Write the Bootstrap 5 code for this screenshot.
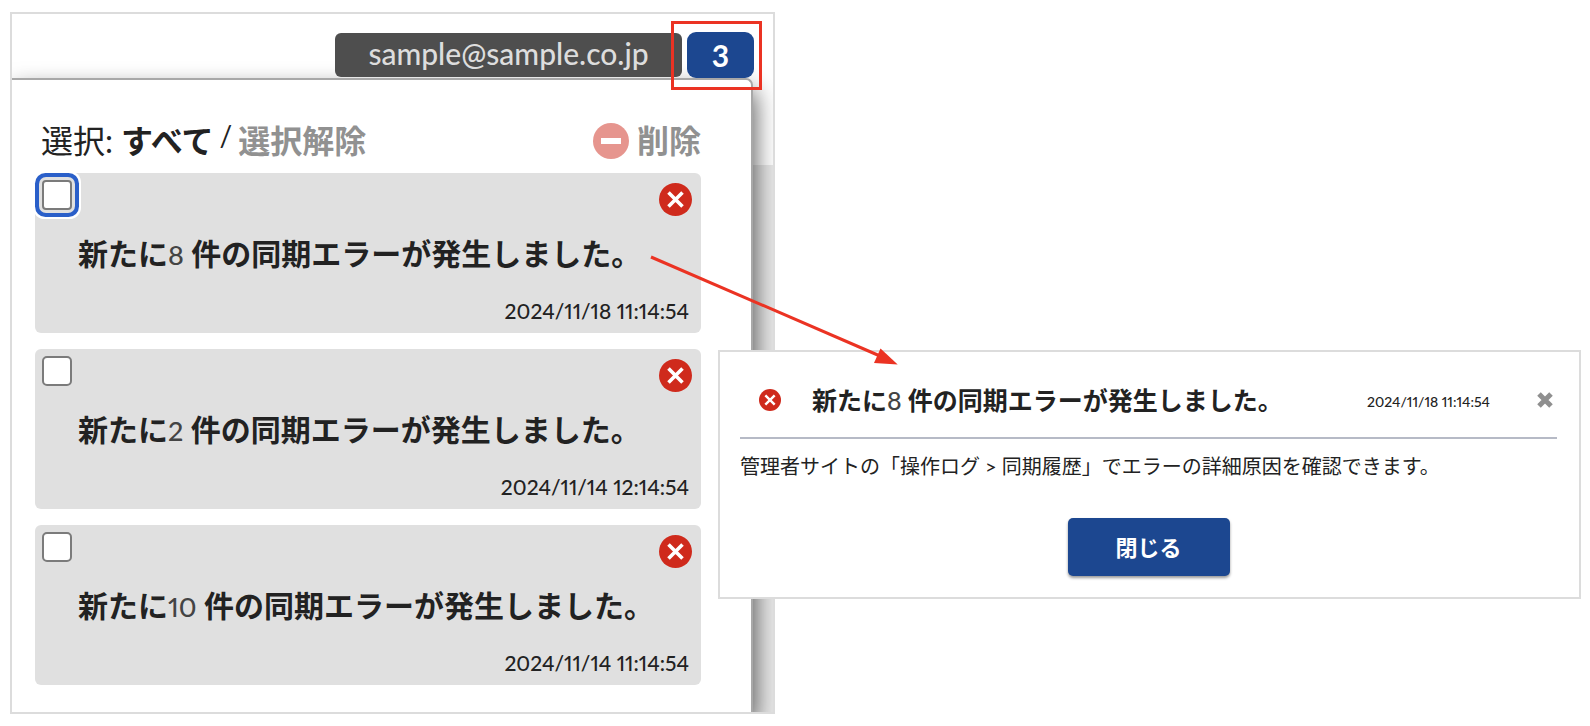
<!DOCTYPE html>
<html lang="ja">
<head>
<meta charset="utf-8">
<meta name="viewport" content="width=device-width, initial-scale=1">
<title>通知</title>
<link href="https://cdn.jsdelivr.net/npm/bootstrap@5.3.0/dist/css/bootstrap.min.css" rel="stylesheet">
<style>
  body { font-family: Lato, "Noto Sans CJK JP", sans-serif; color: #222; background: #fff; line-height: 1.5; }
  .stage { display: grid; grid-template-columns: 708fr 57fr 806fr; padding: 12px 9px 12px 10px; }
  .window { grid-area: 1 / 1 / 2 / 3; border: 2px solid #dcdcdc; background: linear-gradient(#fff 151px, #e8e8e8 151px); }
  .dialog-box { grid-area: 1 / 2 / 2 / 4; align-self: start; margin-top: 338px; border: 2px solid #dcdcdc; background: #fff; z-index: 2; padding: 0 22px 21px 20px; }
  .topbar { padding: 18px 19px 0 0; gap: 5px; }
  .account { width: 347px; height: 44px; margin-top: 1px; border-radius: 6px; background: #4e4e4e; color: #ddd; font-size: 30px; line-height: 38px; font-weight: 500; }
  .account:hover { background: #5a5a5a; color: #fff; }
  .counter { width: 67px; height: 46px; border-radius: 9px; background: #1c4790; color: #fff; font-size: 30px; line-height: 46px; font-weight: 700; }
  .counter:hover { background: #163a78; color: #fff; }
  .callout { position: absolute; top: -11px; left: -16px; right: -8px; bottom: -12px; border: 3px solid #eb3323; z-index: 3; }
  .drawer { margin-right: 20px; padding: 37px 50px 27px 23px; border: solid #a8a8a8; border-width: 2px 2px 0 0; border-radius: 0 7px 0 0; background: #fff; box-shadow: 2px 12px 24px rgba(0,0,0,.65); }
  .clip { overflow: hidden; }
  .toolbar { font-size: 32px; line-height: 48px; padding: 0 0 8px 6px; }
  .toolbar button { font-size: 32px; line-height: 48px; font-weight: 700; }
  .muted, .muted:hover { color: #919191; }
  .slash { font-size: 28px; line-height: 36px; margin: 0 6px; }
  .notice { border-radius: 6px; background: #e0e0e0; padding: 7px 9px 6px 7px; }
  .notice + .notice { margin-top: 16px; }
  .notice .form-check-input { width: 30px; height: 30px; margin: 0; border: 2px solid #7b7b7b; border-radius: 5px; }
  .notice .form-check-input.focused { border-radius: 4px; box-shadow: 0 0 0 3px #e0e0e0, 0 0 0 7px #2a5fc9, 0 0 0 9px #fff; }
  .state { margin-top: 3px; }
  .notice h2 { font-size: 30px; line-height: 44px; margin: 15px 0 20px 36px; font-weight: 700; }
  .num { font-size: 27px; line-height: 1; color: #444; }
  .notice time { display: block; font-size: 21px; line-height: 32px; text-align: right; padding-right: 3px; }
  time, .num { font-variant-numeric: proportional-nums; font-weight: 500; }
  .dialog-head { border-bottom: 2px solid #b6bac6; padding: 29px 4px 18px 19px; }
  .dialog-head h2 { font-size: 25px; line-height: 38px; margin: 0 0 0 31px; font-weight: 700; }
  .dialog-head .num { font-size: 25px; }
  .dialog-head time { font-size: 14px; line-height: 24px; margin: 3px 47px 0 auto; }
  .dialog-box p { font-size: 20px; line-height: 30px; margin: 12px 0 37px; }
  .close-btn { width: 162px; height: 58px; border-radius: 5px; background: #1c4790; color: #fff; font-size: 22px; font-weight: 700; box-shadow: 0 2px 3px rgba(0,0,0,.4); }
  .close-btn:hover { background: #163a78; color: #fff; }
  .arrow { position: absolute; left: 640px; top: 245px; z-index: 4; pointer-events: none; }
</style>
</head>
<body>
<svg class="d-none" xmlns="http://www.w3.org/2000/svg">
  <symbol id="error" viewBox="0 0 33 33"><circle cx="16.500" cy="16.500" r="16.500" fill="#cf2a1c"/><path d="M9.500 9.500l14 14M23.500 9.500l-14 14" stroke="#fff" stroke-width="3.600"/></symbol>
</svg>
<main class="stage position-relative">
  <section class="window" aria-label="通知一覧">
    <div class="clip">
    <header class="topbar d-flex justify-content-end position-relative">
      <button type="button" class="account btn border-0 px-0 pt-0 pb-1">sample@sample.co.jp</button>
      <div class="position-relative">
        <button type="button" class="counter btn border-0 p-0">3</button>
        <span class="callout"></span>
      </div>
    </header>
    <div class="drawer">
      <div class="toolbar d-flex align-items-center">
        <span>選択:</span>
        <button type="button" class="btn text-reset border-0 p-0 ms-2">すべて</button>
        <span class="slash align-self-start">/</span>
        <button type="button" class="btn border-0 p-0 muted">選択解除</button>
        <button type="button" class="btn border-0 p-0 muted ms-auto d-flex align-items-center gap-2">
          <svg width="36" height="36" viewBox="0 0 36 36"><circle cx="18" cy="18" r="18" fill="#e6958e"/><path d="M8 18h20" stroke="#fff" stroke-width="6"/></svg>削除
        </button>
      </div>
      <article class="notice">
        <div class="d-flex justify-content-between align-items-start">
          <input class="form-check-input focused" type="checkbox" id="n1" aria-labelledby="t1">
          <svg class="state" width="33" height="33"><use href="#error"/></svg>
        </div>
        <h2 id="t1">新たに<span class="num">8</span> 件の同期エラーが発生しました。</h2>
        <time>2024/11/18 11:14:54</time>
      </article>
      <article class="notice">
        <div class="d-flex justify-content-between align-items-start">
          <input class="form-check-input" type="checkbox" id="n2" aria-labelledby="t2">
          <svg class="state" width="33" height="33"><use href="#error"/></svg>
        </div>
        <h2 id="t2">新たに<span class="num">2</span> 件の同期エラーが発生しました。</h2>
        <time>2024/11/14 12:14:54</time>
      </article>
      <article class="notice">
        <div class="d-flex justify-content-between align-items-start">
          <input class="form-check-input" type="checkbox" id="n3" aria-labelledby="t3">
          <svg class="state" width="33" height="33"><use href="#error"/></svg>
        </div>
        <h2 id="t3">新たに<span class="num">10</span> 件の同期エラーが発生しました。</h2>
        <time>2024/11/14 11:14:54</time>
      </article>
    </div>
    </div>
  </section>

  <section class="dialog-box" role="dialog" aria-labelledby="dt">
    <div class="dialog-head d-flex align-items-center">
      <svg width="22" height="22"><use href="#error"/></svg>
      <h2 id="dt">新たに<span class="num">8</span> 件の同期エラーが発生しました。</h2>
      <time>2024/11/18 11:14:54</time>
      <button type="button" class="btn border-0 p-0 d-flex" aria-label="閉じる">
        <svg width="16" height="16" viewBox="0 0 16 16"><path d="M2 2l12 12M14 2L2 14" stroke="#8f8f8f" stroke-width="5"/></svg>
      </button>
    </div>
    <p>管理者サイトの「操作ログ &gt; 同期履歴」でエラーの詳細原因を確認できます。</p>
    <div class="text-center"><button type="button" class="close-btn btn border-0">閉じる</button></div>
  </section>

  <svg class="arrow" width="270" height="130" viewBox="640 245 270 130"><path d="M651 257L880 356" stroke="#eb3323" stroke-width="3"/><path d="M897.700 364.500L880.500 348.500 874 363z" fill="#eb3323"/></svg>
</main>
<script src="https://cdn.jsdelivr.net/npm/bootstrap@5.3.0/dist/js/bootstrap.bundle.min.js"></script>
</body>
</html>
